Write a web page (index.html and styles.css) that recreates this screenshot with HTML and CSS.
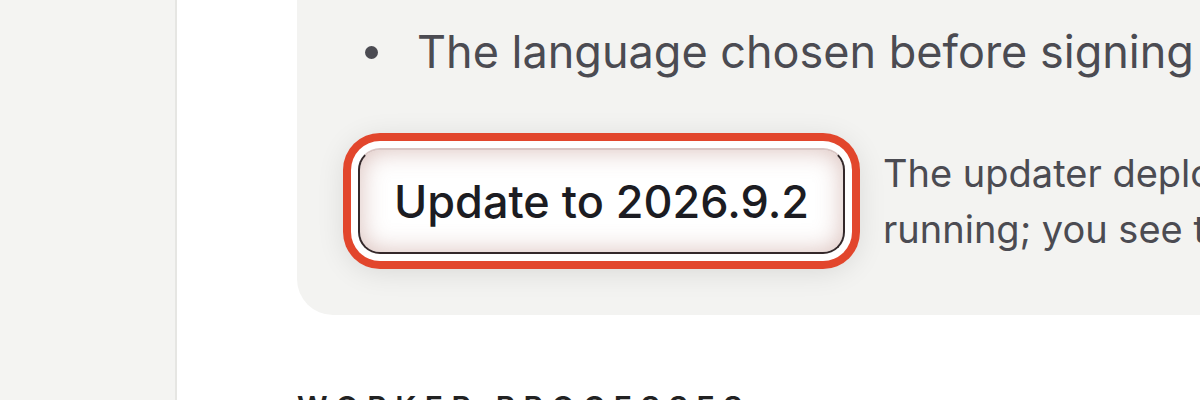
FILE: index.html
```html
<!DOCTYPE html>
<html lang="en">
<head>
    <meta charset="UTF-8">
    <meta name="viewport" content="width=device-width, initial-scale=1.0">
    <title>Updates</title>
    <link rel="stylesheet" href="styles.css">
</head>
<body>
    <aside class="sidebar"></aside>

    <main class="main">
        <section class="update-card">
            <ul class="notes">
                <li>The language chosen before signing in is kept after the update</li>
            </ul>
            <div class="update-row">
                <button class="update-btn">Update to 2026.9.2</button>
                <p class="update-hint">The updater deploys while running; you see the result.</p>
            </div>
        </section>

        <h2 class="section-title">Worker processes</h2>
    </main>
</body>
</html>
```

FILE: styles.css
```css
* {
    box-sizing: border-box;
    margin: 0;
    padding: 0;
}
html, body {
    height: 100%;
    overflow: hidden;
}
body {
    display: flex;
    font-family: 'Inter', 'Noto Sans', sans-serif;
    background-color: #fff;
    color: #4b4b52;
}
.sidebar {
    width: 177px;
    flex-shrink: 0;
    background-color: #f4f4f2;
    border-right: 2px solid #e6e6e3;
}
.main {
    flex: 1;
    min-width: 0;
    padding-left: 120px;
}
.update-card {
    width: 1100px;
    margin-top: -60px;
    padding: 80px 0 58px 61px;
    background-color: #f3f3f1;
    border-radius: 36px;
}
.notes {
    list-style: none;
    font-size: 45px;
    line-height: 64px;
    white-space: nowrap;
}
.notes li {
    display: flex;
    align-items: center;
    gap: 39px;
}
.notes li::before {
    content: "";
    flex-shrink: 0;
    width: 13px;
    height: 13px;
    margin-left: 7px;
    border-radius: 50%;
    background-color: #4b4b52;
}
.update-row {
    display: flex;
    align-items: center;
    gap: 38px;
    margin-top: 61px;
}
.update-btn {
    flex-shrink: 0;
    width: 487px;
    height: 106px;
    font-family: 'Inter', 'Noto Sans', sans-serif;
    font-size: 45px;
    font-weight: 500;
    color: #1c1c22;
    background-color: #fff;
    border: 2px solid #34282a;
    border-top-color: #d9c6c4;
    border-radius: 22px;
    box-shadow:
        inset 0 0 26px rgba(170, 110, 100, 0.45),
        0 0 0 7px #fff,
        0 0 0 15px #e2462c,
        0 4px 30px 12px rgba(0, 0, 0, 0.12);
    cursor: pointer;
}
.update-hint {
    width: 580px;
    flex-shrink: 0;
    font-size: 38px;
    line-height: 56px;
}
.section-title {
    margin-top: 74px;
    font-size: 30px;
    font-weight: 600;
    letter-spacing: 8.5px;
    text-transform: uppercase;
    color: #222;
}
```
